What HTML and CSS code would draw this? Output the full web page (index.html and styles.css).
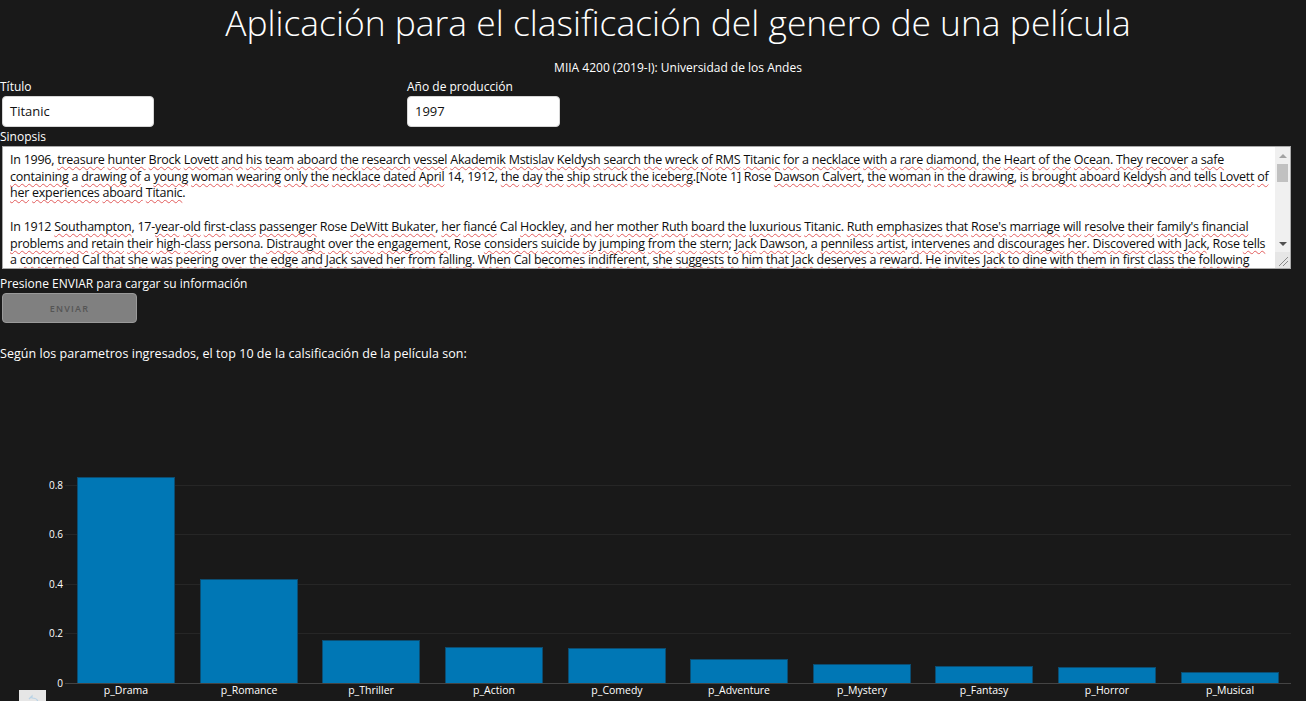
FILE: index.html
```html
<!DOCTYPE html>
<html lang="es">
<head>
<meta charset="utf-8">
<title>Clasificación de género</title>
<link rel="stylesheet" href="styles.css">
</head>
<body>
<div class="page">
  <header class="head">
    <h1 class="title">Aplicación para el clasificación del genero de una película</h1>
    <p class="subtitle">MIIA 4200 (2019-I): Universidad de los Andes</p>
  </header>

  <div class="fields">
    <div class="field field-title">
      <div class="label">Título</div>
      <div class="input">Titanic</div>
    </div>
    <div class="field field-year">
      <div class="label">Año de producción</div>
      <div class="input">1997</div>
    </div>
  </div>

  <div class="label">Sinopsis</div>
  <div class="textarea">
    <div class="ta-text">
      <div class="ln">In 1996, treasure hunter Brock Lovett and his team aboard the research vessel Akademik Mstislav Keldysh search the wreck of RMS Titanic for a necklace with a rare diamond, the Heart of the Ocean. They recover a safe</div>
      <div class="ln">containing a drawing of a young woman wearing only the necklace dated April 14, 1912, the day the ship struck the iceberg.[Note 1] Rose Dawson Calvert, the woman in the drawing, is brought aboard Keldysh and tells Lovett of</div>
      <div class="ln">her experiences aboard Titanic.</div>
      <div class="ln blank">&nbsp;</div>
      <div class="ln">In 1912 Southampton, 17-year-old first-class passenger Rose DeWitt Bukater, her fiancé Cal Hockley, and her mother Ruth board the luxurious Titanic. Ruth emphasizes that Rose's marriage will resolve their family's financial</div>
      <div class="ln">problems and retain their high-class persona. Distraught over the engagement, Rose considers suicide by jumping from the stern; Jack Dawson, a penniless artist, intervenes and discourages her. Discovered with Jack, Rose tells</div>
      <div class="ln">a concerned Cal that she was peering over the edge and Jack saved her from falling. When Cal becomes indifferent, she suggests to him that Jack deserves a reward. He invites Jack to dine with them in first class the following</div>
    </div>
    <div class="sbar">
      <div class="sb-btn sb-up"><span class="tri-up"></span></div>
      <div class="sb-track"><div class="sb-thumb"></div></div>
      <div class="sb-btn sb-down"><span class="tri-down"></span></div>
      <div class="sb-grip">
        <svg width="15" height="16" viewBox="0 0 15 16"><path d="M4 14 L13 5 M8 14 L13 9" stroke="#8a8a8a" stroke-width="1" fill="none"/></svg>
      </div>
    </div>
  </div>

  <div class="hint">Presione ENVIAR para cargar su información</div>
  <button class="btn" type="button">ENVIAR</button>

  <div class="result">Según los parametros ingresados, el top 10 de la calsificación de la película son:</div>

  <div class="chart">
    <svg class="chart-svg" width="1306" height="330" viewBox="0 371 1306 330">
      <g class="grid">
        <line x1="65" y1="485.5" x2="1291" y2="485.5"/>
        <line x1="65" y1="534.5" x2="1291" y2="534.5"/>
        <line x1="65" y1="584.5" x2="1291" y2="584.5"/>
        <line x1="65" y1="633.5" x2="1291" y2="633.5"/>
      </g>
      <g class="bars">
        <rect x="77.5" y="477.5" width="97" height="206"/>
        <rect x="200.5" y="579.5" width="97" height="104"/>
        <rect x="322.5" y="640.5" width="97" height="43"/>
        <rect x="445.5" y="647.5" width="97" height="36"/>
        <rect x="568.5" y="648.5" width="97" height="35"/>
        <rect x="690.5" y="659.5" width="97" height="24"/>
        <rect x="813.5" y="664.5" width="97" height="19"/>
        <rect x="935.5" y="666.5" width="97" height="17"/>
        <rect x="1058.5" y="667.5" width="97" height="16"/>
        <rect x="1181.5" y="672.5" width="97" height="11"/>
      </g>
      <line class="zero" x1="65" y1="683.5" x2="1291" y2="683.5"/>
      <g class="yticks">
        <text x="63" y="489">0.8</text>
        <text x="63" y="538">0.6</text>
        <text x="63" y="588">0.4</text>
        <text x="63" y="637">0.2</text>
        <text x="63" y="687">0</text>
      </g>
      <g class="xticks">
        <text x="126" y="694">p_Drama</text>
        <text x="249" y="694">p_Romance</text>
        <text x="371" y="694">p_Thriller</text>
        <text x="494" y="694">p_Action</text>
        <text x="617" y="694">p_Comedy</text>
        <text x="739" y="694">p_Adventure</text>
        <text x="862" y="694">p_Mystery</text>
        <text x="984" y="694">p_Fantasy</text>
        <text x="1107" y="694">p_Horror</text>
        <text x="1230" y="694">p_Musical</text>
      </g>
      <g class="modebtn">
        <rect x="19" y="690" width="27" height="16" fill="#e6e6e6"/>
        <path d="M29 699 L32 696 L32 698 C36 698 38 700 38 703" stroke="#b9d3e6" stroke-width="1.2" fill="none"/>
      </g>
    </svg>
  </div>
</div>
<script src="script.js"></script>
</body>
</html>
```

FILE: styles.css
```css
html, body {
  margin: 0;
  padding: 0;
  overflow: hidden;
  background: #191919;
}
body {
  color: #ffffff;
  font-family: "Open Sans", "Liberation Sans", sans-serif;
  font-size: 12px;
  line-height: 16px;
}
.page {
  width: 1306px;
}
.head {
  padding-left: 50px;
  text-align: center;
}
.title {
  margin: 0;
  font-size: 35.4px;
  font-weight: 300;
  line-height: 44px;
}
.subtitle {
  margin: 16px 0 0;
  font-size: 12px;
}
.fields {
  display: flex;
  margin-top: 3px;
}
.field-title {
  width: 407px;
}
.label {
  font-size: 12px;
  line-height: 16px;
}
.input {
  margin-top: 1px;
  margin-left: 2px;
  width: 143px;
  height: 29px;
  padding: 0 0 0 7px;
  background: #ffffff;
  border: 1px solid #d6d6d6;
  border-radius: 4px;
  color: #111;
  font-size: 13px;
  line-height: 29px;
}
.field-year .input {
  margin-left: 0;
  width: 144px;
}
.fields + .label {
  margin-top: 2px;
}
.textarea {
  display: flex;
  margin: 1px 0 0 2px;
  width: 1287px;
  height: 121px;
  background: #ffffff;
  border: 1px solid #a9a9a9;
}
.ta-text {
  flex: 1;
  overflow: hidden;
  padding: 5px 0 0 7px;
  color: #0d0d0d;
  font-size: 12.5px;
  line-height: 16.7px;
  white-space: nowrap;
  letter-spacing: -0.25px;
}
.sp {
  text-decoration: underline wavy #e25c5c;
  text-decoration-thickness: 1px;
  text-underline-offset: 2px;
  text-decoration-skip-ink: none;
}
.sbar {
  width: 15px;
  display: flex;
  flex-direction: column;
  background: #f0f0f0;
}
.sb-btn {
  height: 17px;
  display: flex;
  align-items: center;
  justify-content: center;
}
.tri-up {
  width: 0;
  height: 0;
  border-left: 4px solid transparent;
  border-right: 4px solid transparent;
  border-bottom: 4px solid #a3a3a3;
}
.tri-down {
  width: 0;
  height: 0;
  border-left: 4px solid transparent;
  border-right: 4px solid transparent;
  border-top: 4px solid #505050;
}
.sb-track {
  flex: 1;
  padding: 0 2px;
}
.sb-thumb {
  height: 18px;
  background: #c1c1c1;
}
.sb-grip {
  height: 16px;
  background: #e6e6e6;
}
.sb-grip svg {
  display: block;
}
.hint {
  margin-top: 7px;
}
.btn {
  display: block;
  margin: 1px 0 0 2px;
  width: 135px;
  height: 30px;
  padding: 0;
  background: #808080;
  border: 1px solid #9a9a9a;
  border-radius: 4px;
  color: #555555;
  font-family: "Open Sans", "Liberation Sans", sans-serif;
  font-size: 9px;
  font-weight: 600;
  letter-spacing: 1.2px;
}
.result {
  margin-top: 23px;
  font-size: 12.5px;
  letter-spacing: 0.05px;
}
.chart {
  margin-top: 9px;
  height: 330px;
}
.chart-svg {
  display: block;
}
.grid line {
  stroke: #262626;
  stroke-width: 1;
}
.zero {
  stroke: #444444;
  stroke-width: 1;
}
.bars rect {
  fill: #0077b5;
  stroke: #0b4d72;
  stroke-width: 1;
}
.yticks text {
  fill: #ffffff;
  font-family: "Open Sans", "Liberation Sans", sans-serif;
  font-size: 10px;
  text-anchor: end;
}
.xticks text {
  fill: #ffffff;
  font-family: "Open Sans", "Liberation Sans", sans-serif;
  font-size: 10.5px;
  text-anchor: middle;
}
```

FILE: script.js
```js
(function () {
  var ok = { "In": 1, "a": 1, "Rose": 1, "Cal": 1, "persona": 1, "Note": 1 };
  var lines = document.querySelectorAll('.ta-text .ln');
  for (var i = 0; i < lines.length; i++) {
    var el = lines[i];
    if (el.classList.contains('blank')) continue;
    var t = el.textContent;
    el.innerHTML = t.replace(/[A-Za-zÀ-ÿ']+/g, function (w) {
      return ok[w] ? w : '<span class="sp">' + w + '</span>';
    });
  }
})();
```
